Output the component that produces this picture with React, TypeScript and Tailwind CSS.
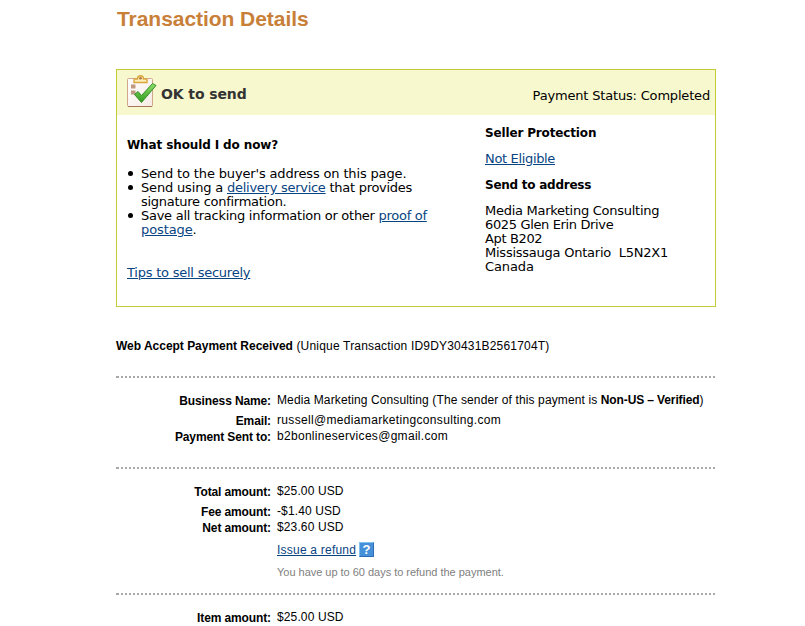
import type { ReactNode } from "react";

const link = "text-[#084482] underline";

function ClipboardIcon() {
  return (
    <svg width="30" height="34" viewBox="0 0 30 34" className="shrink-0">
      <defs>
        <linearGradient id="paper" x1="0" y1="0" x2="1" y2="1">
          <stop offset="0" stopColor="#ffffff" />
          <stop offset="1" stopColor="#f6ebe3" />
        </linearGradient>
        <linearGradient id="tick" x1="0" y1="0" x2="0" y2="1">
          <stop offset="0" stopColor="#8fe06a" />
          <stop offset="1" stopColor="#2f9a1c" />
        </linearGradient>
      </defs>
      <rect x="0.5" y="4.5" width="25" height="28" rx="1" fill="url(#paper)" stroke="#cfa88c" />
      <path d="M1 32.5h24" stroke="#a97558" />
      <path d="M7 8.500V6q0-1 1-1h2.500C10.500 2.700 11.500 1.700 13.500 1.700s3 1 3 3.300H19q1 0 1 1v2.500z" fill="#fdeeb8" stroke="#dba63c" strokeWidth="1.4" />
      <circle cx="13.5" cy="4.3" r="1.3" fill="#a9743c" />
      <rect x="4" y="10.500" width="4.500" height="4" fill="#c09a80" />
      <rect x="4" y="16.500" width="4.500" height="4" fill="#c09a80" />
      <path d="M7.500 20.500l3.500-3 3.500 4L25.500 9.500l3.500 2L14.500 28.500z" fill="url(#tick)" stroke="#27851b" strokeWidth="0.9" strokeLinejoin="round" />
    </svg>
  );
}

function HelpIcon() {
  return (
    <span className="ml-[3px] flex h-[15px] w-[15px] items-center justify-center border border-t-[#7fc0ee] border-r-[#2f6cb5] border-b-[#2f6cb5] border-l-[#7fc0ee] bg-[#4590d8] text-[13px] leading-none font-bold text-white">
      ?
    </span>
  );
}

function Bullet({ children }: { children: ReactNode }) {
  return (
    <li className="flex gap-2 pl-px">
      <span className="mt-1 h-[5px] w-[5px] shrink-0 rounded-full bg-black" />
      <div>{children}</div>
    </li>
  );
}

function Row({ label, className, children }: { label: string; className: string; children: ReactNode }) {
  return (
    <div className={`flex ${className}`}>
      <div className="w-[155px] pt-px text-right font-bold tracking-[-0.12px]">{label}</div>
      <div className="pl-1.5">{children}</div>
    </div>
  );
}

function Divider() {
  return (
    <div className="h-0.5 w-[600px] border-l border-[#a8a8a8] bg-[repeating-linear-gradient(90deg,#a8a8a8_0_2px,transparent_2px_4px)]" />
  );
}

export default function App() {
  return (
    <div className="h-[626px] w-[805px] overflow-hidden bg-white pl-[116px] font-['Liberation_Sans',Arial,sans-serif] text-xs leading-4 tracking-[0.12px] text-black">
      <h1 className="h-[69px] pt-[7px] pl-px text-[21px] leading-6 font-bold tracking-[-0.05px] text-[#c88039]">Transaction Details</h1>

      <section className="h-[238px] w-[600px] border border-[#c3cc37] font-['DejaVu_Sans',Verdana,sans-serif] text-[13px] leading-[14px] tracking-[-0.27px]">
        <div className="flex h-[45px] items-start justify-between bg-[#f8f8cf] pr-[5px] pl-2.5">
          <div className="flex items-center pt-[4px]">
            <ClipboardIcon />
            <h2 className="pt-1.5 pl-1 text-sm font-bold tracking-[-0.1px] text-[#333]">OK to send</h2>
          </div>
          <p className="pt-[19px] tracking-[-0.18px]">Payment Status: Completed</p>
        </div>
        <div className="flex pl-2.5">
          <div className="w-[358px] pt-[23px]">
            <h3 className="text-xs leading-[14px] font-bold tracking-[-0.12px]">What should I do now?</h3>
            <ul className="pt-[15px]">
              <Bullet>
                <span className="tracking-[-0.15px]">Send to the buyer's address on this page.</span>
              </Bullet>
              <Bullet>
                <span className="tracking-[-0.17px]">Send using a </span>
                <a className={link}>delivery service</a> that provides
                <br />
                signature confirmation.
              </Bullet>
              <Bullet>
                Save all tracking information or other <a className={link}>proof of</a>
                <br />
                <a className={`${link} tracking-[-0.1px]`}>postage</a>.
              </Bullet>
            </ul>
            <p className="pt-[29px]">
              <a className={`${link} tracking-[-0.23px]`}>Tips to sell securely</a>
            </p>
          </div>
          <div className="pt-[11px]">
            <h3 className="text-xs leading-[14px] font-bold tracking-[-0.15px]">Seller Protection</h3>
            <p className="py-3">
              <a className={`${link} tracking-[-0.34px]`}>Not Eligible</a>
            </p>
            <h3 className="text-xs leading-[14px] font-bold tracking-[-0.25px]">Send to address</h3>
            <address className="pt-3 not-italic">
              Media Marketing Consulting
              <br />
              <span className="tracking-[-0.36px]">6025 Glen Erin Drive</span>
              <br />
              <span className="tracking-[-0.36px]">Apt B202</span>
              <br />
              <span className="tracking-[-0.24px]">Mississauga Ontario&nbsp; L5N2X1</span>
              <br />
              <span className="tracking-[-0.1px]">Canada</span>
            </address>
          </div>
        </div>
      </section>

      <p className="h-[69px] pt-[31px] tracking-[0.19px]">
        <b className="tracking-[-0.02px]">Web Accept Payment Received</b> (Unique Transaction ID9DY30431B2561704T)
      </p>
      <Divider />

      <div className="h-[89px] pt-[14px]">
        <Row label="Business Name:" className="h-5">
          Media Marketing Consulting (The sender of this payment is{" "}
          <b className="tracking-[-0.12px]">Non-US – Verified</b>)
        </Row>
        <Row label="Email:" className="h-4">
          <span className="tracking-[0.33px]">russell@mediamarketingconsulting.com</span>
        </Row>
        <Row label="Payment Sent to:" className="h-4">
          <span className="tracking-[0.3px]">b2bonlineservices@gmail.com</span>
        </Row>
      </div>
      <Divider />

      <div className="h-[124px] pt-[14px]">
        <Row label="Total amount:" className="h-5">$25.00 USD</Row>
        <Row label="Fee amount:" className="h-4">-$1.40 USD</Row>
        <Row label="Net amount:" className="h-[23px]">$23.60 USD</Row>
        <div className="flex h-[22px] pl-[161px]">
          <a className={`${link} tracking-[0.22px]`}>Issue a refund</a>
          <HelpIcon />
        </div>
        <p className="pl-[161px] text-[11px] leading-4 tracking-[-0.02px] text-[#808080]">You have up to 60 days to refund the payment.</p>
      </div>
      <Divider />

      <div className="pt-[14px]">
        <Row label="Item amount:" className="h-5">$25.00 USD</Row>
      </div>
    </div>
  );
}
